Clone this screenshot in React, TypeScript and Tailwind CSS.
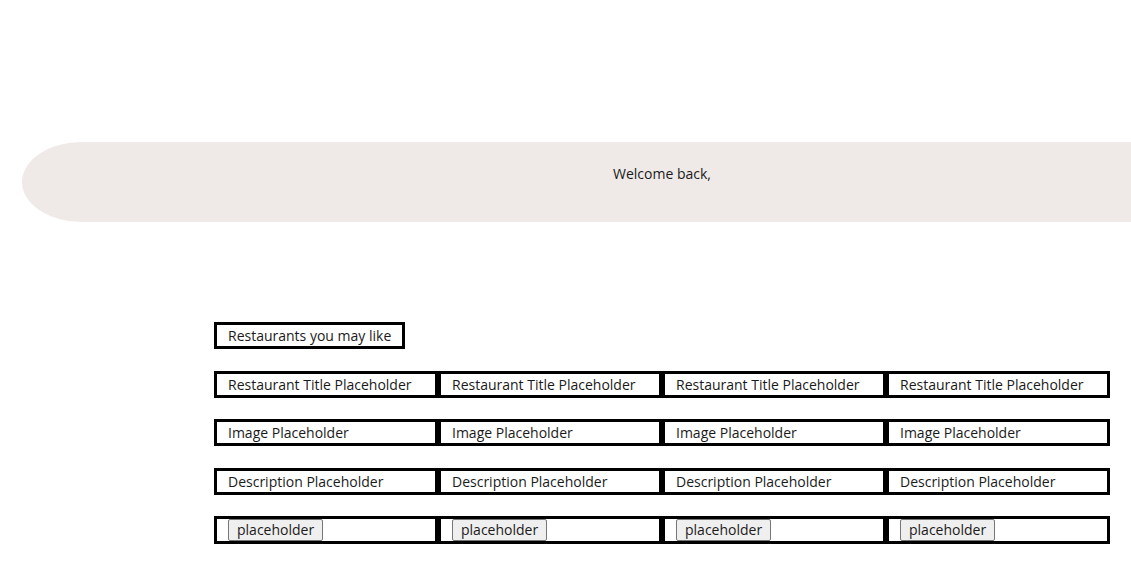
import React from 'react';

const COLS = [0, 1, 2, 3];

function Row({ label, tall }: { label?: string; tall?: boolean }) {
  return (
    <div className="flex mt-[21.5px]">
      {COLS.map((i) => (
        <div
          key={i}
          className={`w-[224px] border-[3px] border-black pl-[11px] flex items-center ${tall ? 'h-[28px]' : 'h-[27px]'}`}
        >
          {label ? (
            <span>{label}</span>
          ) : (
            <button className="h-[22px] px-[8px] bg-[#efefef] border border-[#767676] rounded-[2px] leading-none">
              placeholder
            </button>
          )}
        </div>
      ))}
    </div>
  );
}

export default function App() {
  return (
    <div
      className="w-[1131px] h-[566px] overflow-hidden bg-white text-[#1a1a1a] text-[14px]"
      style={{ fontFamily: '"Open Sans", "Noto Sans", sans-serif' }}
    >
      <div className="pt-[142px]">
        <div className="ml-[22px] w-[1280px] h-[80px] bg-[#efeae8] rounded-tl-[60px_40px] rounded-bl-[60px_40px] text-center pt-[21px] text-[14px]">
          Welcome back,
        </div>
      </div>

      <div className="ml-[214px] mt-[100px]">
        <div className="flex w-fit items-center h-[27px] border-[3px] border-black px-[11px]">
          Restaurants you may like
        </div>
        <Row label="Restaurant Title Placeholder" />
        <Row label="Image Placeholder" />
        <Row label="Description Placeholder" />
        <Row tall />
      </div>
    </div>
  );
}
